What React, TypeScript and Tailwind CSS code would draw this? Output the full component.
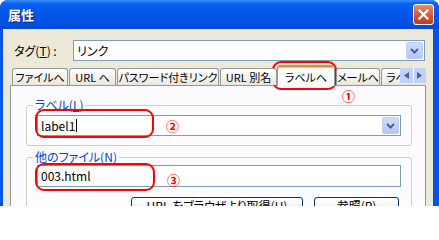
import React from 'react';

const tabs = [
  { label: 'ファイルへ', cls: 'w-[56px]' },
  { label: 'URL へ', cls: 'w-[47px] ml-[1px]' },
  { label: 'パスワード付きリンク', cls: 'w-[102px] ml-[1px]' },
  { label: 'URL 別名', cls: 'w-[57px] ml-[1px]' },
  { label: 'ラベルへ', cls: 'w-[58px]', active: true },
  { label: 'メールへ', cls: 'w-[44px] ml-[1px]' },
  { label: 'ラベルへ', cls: 'w-[50px] ml-[1px] justify-start pl-[4px]' },
];

function Chevron() {
  return (
    <svg width="9" height="6" viewBox="0 0 9 6" className="block">
      <polyline points="1,1 4.5,4.5 8,1" fill="none" stroke="#4d6185" strokeWidth="2" />
    </svg>
  );
}

function DropButton() {
  return (
    <div className="w-[17px] h-full shrink-0 flex items-center justify-center rounded-[2px] border border-[#bccdf6] bg-gradient-to-b from-[#d0dcfc] to-[#b3c7f6]">
      <Chevron />
    </div>
  );
}

function Combo({ text, cursor }: { text: string; cursor?: boolean }) {
  return (
    <div className="flex h-[21px] border border-[#7f9db9] bg-white p-[1px]">
      <div className="flex-1 flex items-center pl-[2px] text-[12px] leading-[14px] text-black">
        {text}
        {cursor && <span className="inline-block w-[1px] h-[13px] bg-black ml-[1px]" />}
      </div>
      <DropButton />
    </div>
  );
}

function U({ children }: { children: React.ReactNode }) {
  return <span className="underline underline-offset-[1px]">{children}</span>;
}

export default function App() {
  return (
    <div className="relative w-[439px] h-[206px] overflow-hidden bg-white font-['Noto_Sans_CJK_JP',sans-serif] [font-feature-settings:'palt']">
      <div className="h-full flex flex-col rounded-t-[8px] bg-[#0054e3] overflow-hidden">
        {/* title bar */}
        <div className="h-[29px] shrink-0 flex items-center pl-[8px] pr-[5px] bg-[linear-gradient(to_bottom,#3c8dfb_0%,#0a63f2_12%,#0256e8_45%,#0054e3_75%,#0049d2_100%)]">
          <span className="flex-1 text-white font-bold text-[13px] leading-[16px] [text-shadow:1px_1px_#0f1f8a]">属性</span>
          <div className="w-[21px] h-[21px] rounded-[3px] border border-white bg-gradient-to-b from-[#e88c6f] via-[#d85a38] to-[#c4391b] flex items-center justify-center">
            <svg width="11" height="11" viewBox="0 0 11 11">
              <path d="M1.5 1.5 L9.5 9.5 M9.5 1.5 L1.5 9.5" stroke="white" strokeWidth="2.2" strokeLinecap="square" />
            </svg>
          </div>
        </div>

        {/* body */}
        <div className="flex-1 ml-[3px] mr-[6px] bg-[#ece9d8] flex flex-col">
          <div className="flex items-center pt-[11px] pl-[11px] pr-[8px]">
            <span className="w-[59px] shrink-0 text-[12px] leading-[14px] text-black">
              タグ(<U>T</U>) :
            </span>
            <div className="flex-1">
              <Combo text="リンク" />
            </div>
          </div>

          <div className="mt-[4px] mx-[7px] flex flex-col flex-1">
            {/* tab strip */}
            <div className="relative z-10 -mb-[1px] flex h-[21px]">
              <div className="flex-1 flex items-end overflow-hidden pl-[2px]">
                {tabs.map((t, i) =>
                  t.active ? (
                    <div
                      key={i}
                      className={`${t.cls} h-[21px] shrink-0 flex items-center justify-center rounded-t-[3px] border border-b-0 border-[#919b9c] border-t-2 border-t-[#e68b2c] bg-[#fcfcfe] shadow-[inset_0_1px_0_#ffc83c] text-[11px] leading-[14px] text-black whitespace-nowrap`}
                    >
                      {t.label}
                    </div>
                  ) : (
                    <div
                      key={i}
                      className={`${t.cls} h-[17px] mb-[1px] shrink-0 flex items-center justify-center overflow-hidden rounded-t-[3px] border border-b-0 border-[#919b9c] bg-gradient-to-b from-white to-[#e8e7df] text-[11px] leading-[14px] text-black whitespace-nowrap`}
                    >
                      {t.label}
                    </div>
                  )
                )}
              </div>
              <div className="w-[26px] shrink-0 self-start mt-[3px] h-[15px] flex gap-[1px] bg-white">
                <div className="flex-1 flex items-center justify-center bg-[#c0d1fb]">
                  <svg width="5" height="7" viewBox="0 0 5 7"><polygon points="5,0 0,3.5 5,7" fill="#4d6185" /></svg>
                </div>
                <div className="flex-1 flex items-center justify-center bg-[#c0d1fb]">
                  <svg width="5" height="7" viewBox="0 0 5 7"><polygon points="0,0 5,3.5 0,7" fill="#4d6185" /></svg>
                </div>
              </div>
            </div>

            {/* panel */}
            <div className="flex-1 border border-[#919b9c] bg-[#fcfcfe] pt-[13px] pl-[15px] pr-[13px]">
              <fieldset className="border border-[#d0d0bf] rounded-[3px] px-[10px] pb-[9px]">
                <legend className="-ml-[4px] px-[2px] text-[12px] leading-[12px] text-[#0046d5]">
                  ラベル(<U>L</U>)
                </legend>
                <div className="mt-[4px]">
                  <Combo text="label1" cursor />
                </div>
              </fieldset>

              <fieldset className="mt-[5px] border border-[#d0d0bf] rounded-[3px] px-[10px] pb-[9px]">
                <legend className="-ml-[4px] px-[2px] text-[12px] leading-[12px] text-[#0046d5]">
                  他のファイル(<U>N</U>)
                </legend>
                <div className="mt-[2px] h-[22px] border border-[#7f9db9] bg-white flex items-center pl-[3px] text-[12px] leading-[14px] text-black">
                  003.html
                </div>
                <div className="mt-[10px] flex justify-end gap-[11px] pr-[2px]">
                  <button className="w-[172px] h-[23px] flex items-start justify-center pt-[1px] rounded-[3px] border border-[#003c74] bg-gradient-to-b from-white via-[#f3f2ec] to-[#d6d0c5] text-[12px] leading-[14px] text-black">
                    URL をブラウザより取得(<U>U</U>)
                  </button>
                  <button className="w-[85px] h-[23px] flex items-start justify-center pt-[1px] rounded-[3px] border border-[#003c74] bg-gradient-to-b from-white via-[#f3f2ec] to-[#d6d0c5] text-[12px] leading-[14px] text-black">
                    参照(<U>R</U>)
                  </button>
                </div>
              </fieldset>
            </div>
          </div>
        </div>
      </div>

      {/* red annotations */}
      <div className="absolute left-[272px] top-[61px] w-[65px] h-[29px] rounded-[9px] border-2 border-[#ff0000]" />
      <span className="absolute left-[342px] top-[89px] text-[13px] leading-[13px] font-bold text-[#ff0000]">①</span>
      <div className="absolute left-[35px] top-[109px] w-[119px] h-[29px] rounded-[9px] border-2 border-[#ff0000]" />
      <span className="absolute left-[166px] top-[119px] text-[13px] leading-[13px] font-bold text-[#ff0000]">②</span>
      <div className="absolute left-[35px] top-[163px] w-[120px] h-[28px] rounded-[9px] border-2 border-[#ff0000]" />
      <span className="absolute left-[167px] top-[173px] text-[13px] leading-[13px] font-bold text-[#ff0000]">③</span>
    </div>
  );
}
